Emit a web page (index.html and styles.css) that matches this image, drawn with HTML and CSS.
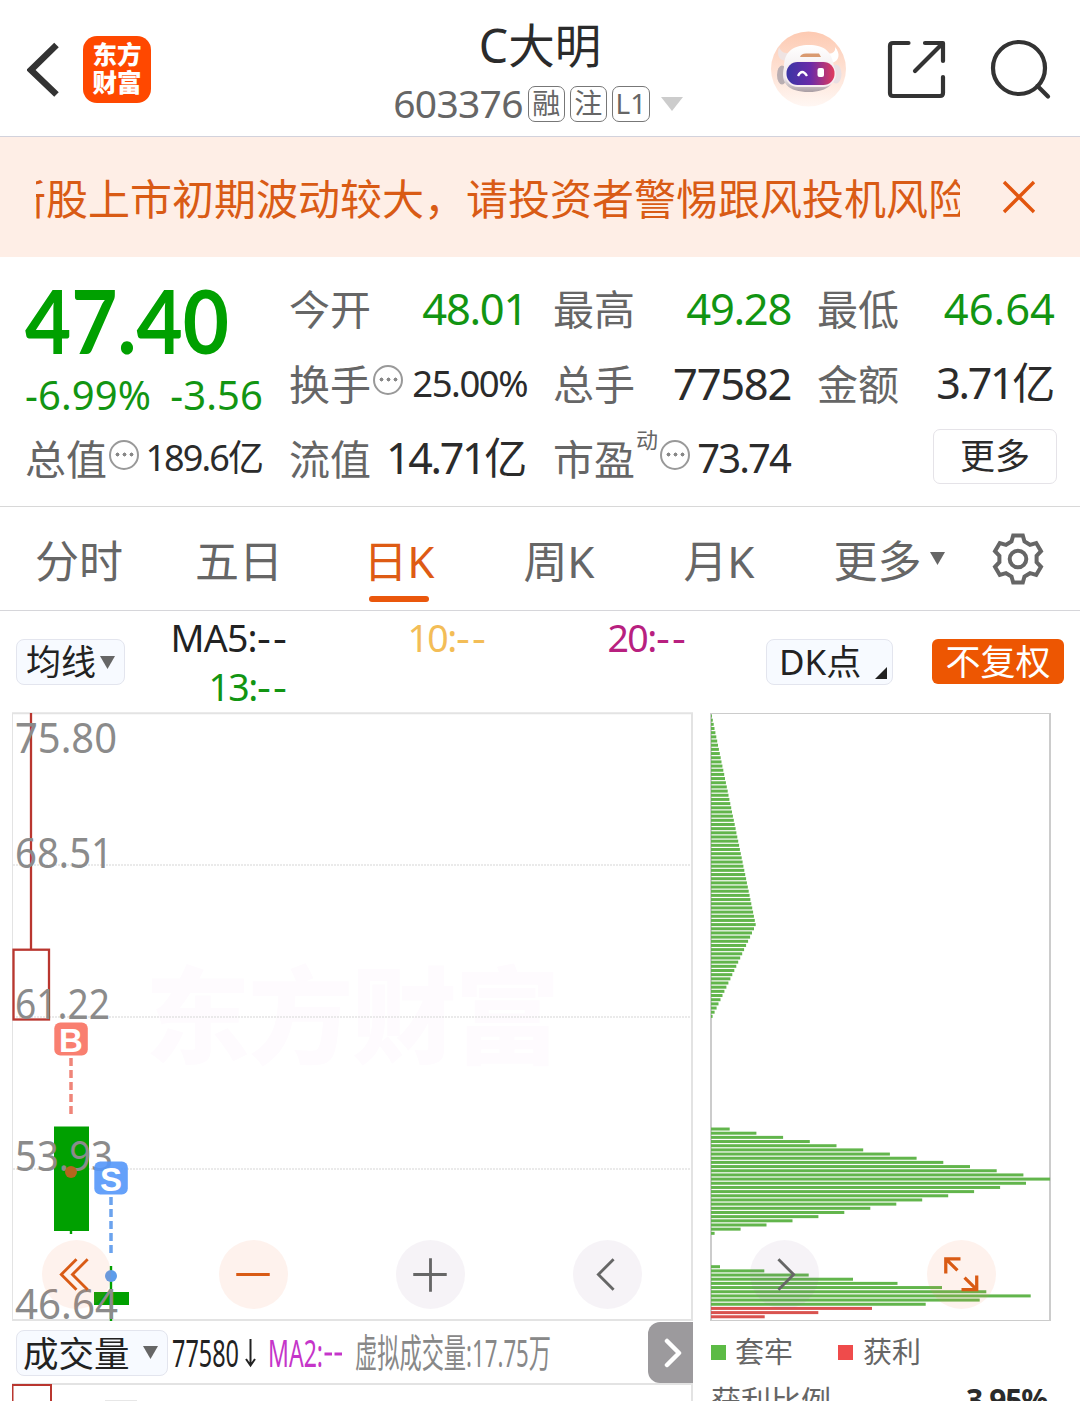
FILE: index.html
```html
<!DOCTYPE html>
<html lang="zh-CN">
<head>
<meta charset="utf-8">
<title>C大明 603376</title>
<link rel="stylesheet" href="styles.css">
</head>
<body>
<div class="app">
  <header class="header">
    <div class="header-left">
      <svg class="back" viewBox="0 0 34 56" width="34" height="56"><path d="M29.500 3 4 28 29.500 52.500" fill="none" stroke="#333" stroke-width="6.500"/></svg>
      <div class="logo"><span>东方</span><span>财富</span></div>
    </div>
    <div class="header-title">
      <h1>C大明</h1>
      <div class="code"><span class="code-num">603376</span><span class="tag">融</span><span class="tag">注</span><span class="tag tag-l">L1</span><svg width="22" height="14" viewBox="0 0 22 14"><path d="M0 0H22L11 14Z" fill="#ccc"/></svg></div>
    </div>
    <div class="header-right">
      <svg width="76" height="76" viewBox="0 0 76 76">
        <defs>
          <linearGradient id="sky" x1="0" y1="0" x2="0" y2="1"><stop offset="0" stop-color="#fdcab2"/><stop offset="1" stop-color="#fff7f3"/></linearGradient>
          <linearGradient id="visor" x1="0" y1="0" x2="1" y2="0"><stop offset="0" stop-color="#3a35a5"/><stop offset=".5" stop-color="#6a2ba8"/><stop offset="1" stop-color="#e03a5c"/></linearGradient>
          <linearGradient id="shell" x1="0" y1="0" x2="0" y2="1"><stop offset="0" stop-color="#fff"/><stop offset=".7" stop-color="#efe9eb"/><stop offset="1" stop-color="#a99da3"/></linearGradient>
        </defs>
        <circle cx="38.500" cy="38" r="37.500" fill="url(#sky)"/>
        <path d="M9 16C6 25 10 30 17 30L24 21C15 24 11 21 9 16Z" fill="#efe3e2"/>
        <path d="M65 16C71 23 69 30 62 32L54 22C62 24 66 21 65 16Z" fill="#fff"/>
        <ellipse cx="12" cy="44" rx="5" ry="9.500" fill="#b9aeb2"/><ellipse cx="66" cy="43" rx="5.500" ry="9.500" fill="#e9e0e3"/>
        <path d="M14 36C14 20 24 14 39 14S62 20 64 36C68 52 58 61 39 61C18 61 10 52 14 36Z" fill="url(#shell)"/>
        <path d="M30 26Q31 22.500 36 22.500H49L51 26Z" fill="#d99a70"/>
        <rect x="15" y="30" width="51" height="26" rx="13" fill="#f8edf1"/>
        <rect x="16.500" y="31" width="48" height="23" rx="11" fill="url(#visor)"/>
        <path d="M28 45Q32 37 37 45" fill="none" stroke="#fff" stroke-width="2.300"/>
        <rect x="47.500" y="37" width="6.500" height="9" rx="2" fill="#fff"/>
      </svg>
      <svg class="share" width="60" height="60" viewBox="0 0 60 60" fill="none" stroke="#333" stroke-width="4.200" stroke-linecap="round" stroke-linejoin="round"><path d="M21.500 4H6Q3 4 3 7V54Q3 57 6 57H53Q56 57 56 54V38M38 4H56V22M55 5 28 32"/></svg>
      <svg width="62" height="62" viewBox="0 0 62 62" fill="none" stroke="#333" stroke-width="4.200" stroke-linecap="round"><circle cx="30" cy="29" r="26"/><path d="M48.500 47 59 57.500"/></svg>
    </div>
  </header>

  <div class="notice">
    <div class="marquee"><span>新股上市初期波动较大，请投资者警惕跟风投机风险</span></div>
    <svg width="34" height="34" viewBox="0 0 34 34"><path d="M2 2 32 32M32 2 2 32" stroke="#e2560f" stroke-width="3.400"/></svg>
  </div>

  <section class="quote">
    <div class="price">
      <svg class="price-now" width="210" height="72"><text x="0" y="66.500" textLength="204" lengthAdjust="spacingAndGlyphs">47.40</text></svg>
      <div class="change"><span>-6.99%</span><span>-3.56</span></div>
    </div>
    <div class="cell"><label>今开</label><b class="down">48.01</b></div>
    <div class="cell"><label>最高</label><b class="down">49.28</b></div>
    <div class="cell"><label>最低</label><b class="down low">46.64</b></div>
    <div class="cell"><label>换手</label><i class="more-dot"></i><b class="mid">25.00%</b></div>
    <div class="cell"><label>总手</label><b>77582</b></div>
    <div class="cell"><label>金额</label><b class="tight">3.71亿</b></div>
    <div class="cell"><label>总值</label><i class="more-dot"></i><b class="small">189.6亿</b></div>
    <div class="cell"><label>流值</label><b class="tight">14.71亿</b></div>
    <div class="cell"><label>市盈</label><sup>动</sup><i class="more-dot"></i><b class="pe">73.74</b></div>
    <div class="cell cell-end"><button class="more">更多</button></div>
  </section>

  <nav class="tabs">
    <a>分时</a><a>五日</a><a class="active">日K</a><a>周K</a><a>月K</a>
    <a class="tab-more">更多<svg width="15" height="13" viewBox="0 0 15 13"><path d="M0 0H15L7.500 13Z" fill="#666"/></svg></a>
    <svg class="gear" width="52" height="54" viewBox="-26 -27 52 54" fill="none" stroke="#666" stroke-width="4"><path d="M-4.800 -23.500H4.800L6.500 -17.500L12 -14.200L18.200 -16L23 -7.800L18.600 -3.200V3.200L23 7.800L18.200 16L12 14.200L6.500 17.500L4.800 23.500H-4.800L-6.500 17.500L-12 14.200L-18.200 16L-23 7.800L-18.600 3.200V-3.200L-23 -7.800L-18.200 -16L-12 -14.200L-6.500 -17.500Z"/><circle r="8.300"/></svg>
  </nav>

  <div class="indicators">
    <div class="pill pill-ma">均线<svg width="15" height="13" viewBox="0 0 15 13"><path d="M0 0H15L7.500 13Z" fill="#666"/></svg></div>
    <div class="ma">
      <span class="ma5">MA5:<u>--</u></span><span class="ma10">10:<u>--</u></span><span class="ma20">20:<u>--</u></span>
      <span class="ma13">13:<u>--</u></span>
    </div>
    <div class="pill pill-dk">DK点<svg width="12" height="12" viewBox="0 0 12 12"><path d="M12 0V12H0Z" fill="#222"/></svg></div>
    <div class="adjust">不复权</div>
  </div>

  <main class="charts">
    <div class="left">
      <svg class="kline" width="682" height="610" viewBox="12 712 682 610">
        <text class="watermark" x="145" y="1055" textLength="415">东方财富</text>
        <path d="M13 865H692M13 1017H692M13 1169H692" stroke="#e3e3e3" stroke-width="1.300" stroke-dasharray="2 1"/>
        <path d="M12.500 1320V713.500" stroke="#e3e3e3"/><path d="M12 713.300H692V1320H12" fill="none" stroke="#e3e3e3" stroke-width="2"/>
        <g fill="none" stroke="#b9362f" stroke-width="2.300"><path d="M31 713V949"/><rect x="13.500" y="949.700" width="35.500" height="69.800"/></g>
        <g fill="#00a000"><rect x="54" y="1126.500" width="35" height="104.500"/><rect x="69.800" y="1230" width="2.400" height="4"/><rect x="94" y="1292" width="35" height="13"/><rect x="109.800" y="1266" width="2.400" height="55"/></g>
        <g class="axis"><text x="15" y="753" textLength="102" lengthAdjust="spacingAndGlyphs">75.80</text><text x="15" y="867.500" textLength="98" lengthAdjust="spacingAndGlyphs">68.51</text><text x="15" y="1019" textLength="95" lengthAdjust="spacingAndGlyphs">61.22</text><text x="15" y="1171" textLength="98" lengthAdjust="spacingAndGlyphs">53.93</text><text x="15" y="1319" textLength="103" lengthAdjust="spacingAndGlyphs">46.64</text></g>
        <path d="M71 1058V1114" stroke="#ef8579" stroke-width="3.500" stroke-dasharray="8 4"/>
        <path d="M111 1197V1253" stroke="#6ba3ee" stroke-width="3.500" stroke-dasharray="8 4"/>
        <circle cx="71" cy="1172" r="6" fill="#b5651d"/><circle cx="111" cy="1276" r="6" fill="#5c9ceb"/>
        <rect x="54.300" y="1022.500" width="33.500" height="33" rx="6" fill="#f97f70"/><rect x="94.300" y="1161.500" width="33.500" height="33" rx="6" fill="#5497fa" opacity=".9"/>
        <g class="mark"><text x="71" y="1051.500">B</text><text x="111" y="1190.500">S</text></g>
      </svg>
      <div class="volume">
        <div class="pill pill-vol">成交量<svg width="15" height="13" viewBox="0 0 15 13"><path d="M0 0H15L7.500 13Z" fill="#666"/></svg></div>
        <svg class="volume-text" width="390" height="50" viewBox="168 1328 390 50">
          <text x="172" y="1367" textLength="67" lengthAdjust="spacingAndGlyphs" fill="#222">77580</text>
          <path d="M250.500 1339V1365M246 1359 250.500 1365.500 255 1359" fill="none" stroke="#222" stroke-width="2"/>
          <text x="268" y="1367" textLength="55" lengthAdjust="spacingAndGlyphs" fill="#c535c9">MA2:</text>
          <path d="M324.500 1354H332M334.500 1354H342" stroke="#c535c9" stroke-width="2.800"/>
          <text x="355" y="1367" textLength="196" lengthAdjust="spacingAndGlyphs" fill="#888">虚拟成交量:17.75万</text>
        </svg>
        <div class="next"><svg width="18" height="30" viewBox="0 0 18 30"><path d="M3 3 15 15 3 27" fill="none" stroke="#fff" stroke-width="4.500" stroke-linecap="round" stroke-linejoin="round"/></svg></div>
      </div>
      <svg class="volume-chart" width="682" height="18" viewBox="12 1383 682 18"><path d="M12 1384H692V1401" fill="none" stroke="#e3e3e3" stroke-width="2"/><path d="M12.500 1401V1385H51V1401" fill="none" stroke="#b9362f" stroke-width="2"/><path d="M105 1400.500H137" stroke="#e7e7e7"/></svg>
    </div>
    <div class="right">
      <svg class="chips" width="342" height="610" viewBox="710 712 342 610">
        <path d="M711 713.500H1050M711 1320.500H1050" stroke="#ccc"/><path d="M711 713V1321M1050 713V1321" stroke="#ccc" stroke-width="2"/>
        <g id="chip-bars"></g>
      </svg>
      <div class="legend"><i class="lg-green"></i><span>套牢</span><i class="lg-red"></i><span>获利</span></div>
      <div class="ratio"><span>获利比例</span><strong>3.95%</strong></div>
    </div>
    <div class="controls">
      <span class="round warm"><svg viewBox="-34 -34 68 68"><path d="M0 -15-15 0 0 15M11 -15-4 0 11 15"/></svg></span>
      <span class="round warm"><svg viewBox="-34 -34 68 68"><path d="M-17 0H16"/></svg></span>
      <span class="round"><svg viewBox="-34 -34 68 68"><path d="M-17 0H16M0 -16V17"/></svg></span>
      <span class="round"><svg viewBox="-34 -34 68 68"><path d="M6 -15-9 0 6 15"/></svg></span>
      <span class="round"><svg viewBox="-34 -34 68 68"><path d="M-6 -15 9 0-6 15"/></svg></span>
      <span class="round warm"><svg viewBox="-34 -34 68 68"><path d="M-4 -4-15 -15M-15.500 -1V-15.500H-1M3 3 14 14M0 15H15V1" stroke-width="3.200"/></svg></span>
    </div>
  </main>
</div>
<script src="chips.js"></script>
</body>
</html>
```
FILE: styles.css
```css
* { box-sizing: border-box; }
body { margin: 0; background: #fff; font-family: "Noto Sans", "Noto Sans CJK SC", sans-serif; color: #2b2b2b; }
.app { width: 1080px; height: 1401px; overflow: hidden; }
svg { display: block; flex: none; }

.header { height: 137px; border-bottom: 1px solid #d2d2dc; display: grid; grid-template-columns: 360px 1fr 360px; }
.header-left { display: flex; align-items: flex-start; padding: 36px 0 0 27px; gap: 22px; }
.back { margin-top: 6px; }
.logo { width: 68px; height: 67px; border-radius: 14px; background: #ff4800; color: #fff; font-size: 24.500px; font-weight: 900; line-height: 28.500px; display: flex; flex-direction: column; align-items: center; justify-content: center; padding-bottom: 1px; }
.header-title { display: flex; flex-direction: column; align-items: center; padding-top: 15px; }
h1 { margin: 0; font-size: 46.500px; font-weight: 400; line-height: 60px; }
.code { display: flex; align-items: center; height: 56px; color: #666; margin: 1px 0 0 -4px; }
.code-num { font-size: 39px; line-height: 50px; letter-spacing: -.7px; margin: -2px 5px 0 0; }
.tag { width: 37px; height: 36px; border: 1.500px solid #777; border-radius: 7px; font-size: 28px; line-height: 33px; text-align: center; margin-right: 5px; }
.tag-l { width: 38px; margin-right: 11px; }
.header-right { display: flex; align-items: flex-start; padding: 31px 0 0 50px; }
.share { margin: 8px 42px 0 41px; }
.header-right svg:last-child { margin-top: 8px; }

.notice { height: 120px; background: #feeee6; display: flex; align-items: center; padding: 0 44px 0 36px; justify-content: space-between; }
.marquee { width: 924px; overflow: hidden; white-space: nowrap; color: #d95b15; font-size: 42px; line-height: 60px; padding-top: 4px; }
.marquee span { margin-left: -32px; }

.quote { height: 250px; border-bottom: 1px solid #d8d8d8; padding: 15px 25px 10px; display: grid; grid-template-columns: repeat(4, 238px); grid-template-rows: repeat(3, 75px); justify-content: space-between; }
.price { grid-row: span 2; color: #00a000; }
.price-now { margin-top: 15px; }
.price-now text { font-family: Lato, sans-serif; font-size: 88.500px; font-weight: 700; fill: #00a000; }
.change { display: flex; justify-content: space-between; font-size: 40px; line-height: 44px; margin-top: 14px; color: #129512; letter-spacing: .1px; }
.cell { display: flex; align-items: center; white-space: nowrap; }
.cell label { font-size: 41px; line-height: 60px; color: #666; margin-top: -2px; }
.cell b { margin: -3px 0 0 auto; font-weight: 400; font-size: 43.500px; line-height: 60px; letter-spacing: -1.300px; }
.cell .down { color: #129512; }
.cell .low { letter-spacing: 0; }
.cell .tight { letter-spacing: -2.300px; margin-right: 2px; font-size: 43px; }
.cell .mid { font-size: 36.500px; letter-spacing: -1.500px; }
.cell .small { font-size: 36px; letter-spacing: -1.900px; margin-right: 1px; }
.cell .pe { font-size: 40px; letter-spacing: -1.900px; margin-right: 1px; }
.more-dot { width: 30px; height: 30px; border: 2px solid #999; border-radius: 50%; margin: -10px 0 0 2px; background: radial-gradient(circle, #888 1.800px, transparent 2.200px) 50% 50% / 7px 7px no-repeat, radial-gradient(circle, #888 1.800px, transparent 2.200px) 3px 50% / 7px 7px no-repeat, radial-gradient(circle, #888 1.800px, transparent 2.200px) 17px 50% / 7px 7px no-repeat; }
sup { font-size: 22px; line-height: 24px; color: #666; align-self: flex-start; margin: 5px 0 0 1px; }
.cell-end { justify-content: flex-end; }
.more { width: 124px; height: 55px; border: 1.500px solid #e5e3e8; border-radius: 7px; background: #fff; font: 35px/50px "Noto Sans", "Noto Sans CJK SC", sans-serif; color: #2b2b2b; padding: 0; margin: -7px -2px 0 0; }

.tabs { height: 104px; border-bottom: 1px solid #d6d6da; display: flex; align-items: center; font-size: 44px; color: #666; }
.tabs a { width: 160px; height: 103px; line-height: 109px; text-align: center; margin-left: -1px; margin-right: 1px; }
.tabs .active { color: #de5b14; position: relative; }
.active::after { content: ""; position: absolute; left: 50px; bottom: 8px; width: 60px; height: 6px; border-radius: 3px; background: #ea570c; }
.tabs .tab-more { width: 180px; padding-top: 4px; display: flex; justify-content: center; align-items: center; gap: 8px; line-height: 60px; }
.tab-more svg { margin-top: -4px; }
.gear { margin-left: 12px; }

.indicators { height: 101px; display: flex; padding: 0 16px; }
.pill { height: 46px; border: 1.500px solid #e3e5ee; border-radius: 8px; background: #f7faff; display: flex; align-items: center; font-size: 35px; line-height: 44px; color: #222; white-space: nowrap; }
.pill-ma { width: 109px; margin-top: 28px; padding-left: 9px; gap: 4px; }
.ma { width: 561px; display: grid; grid-template-columns: 162px 199px 200px; grid-template-rows: 49px 49px; padding-top: 2px; font-size: 37.500px; line-height: 49px; letter-spacing: -1.500px; text-align: right; }
.ma u { text-decoration: none; display: inline-block; letter-spacing: 2px; transform: scaleX(1.150); margin-left: 2px; }
.ma5 { color: #222; letter-spacing: -.8px; } .ma10 { color: #f3bd57; } .ma20 { color: #b8207f; } .ma13 { color: #129512; }
.pill-dk { width: 127px; margin: 28px 0 0 80px; padding-left: 12px; gap: 11px; }
.pill-dk svg { margin: 22px 5px 0 auto; }
.adjust { width: 132px; height: 45px; margin: 28px 0 0 39px; border-radius: 6px; background: #ed5602; color: #fff; font-size: 35px; line-height: 45px; text-align: center; }

.charts { position: relative; display: flex; gap: 16px; padding-left: 12px; height: 689px; }
.left { width: 682px; }
.axis text { font-size: 41.500px; fill: #8b8b8b; }
.watermark { font-size: 105px; font-weight: 900; fill: #fefbfe; }
.mark text { font: 700 33px "Liberation Sans", sans-serif; fill: #fff; text-anchor: middle; }
.volume { height: 61px; display: flex; align-items: center; padding-left: 4px; }
.pill-vol { width: 152px; font-size: 35.500px; padding-left: 6px; gap: 13px; }
.volume-text text { font-size: 39px; }
.next { width: 45px; height: 61px; margin-left: auto; margin-right: 1px; border-radius: 12px 0 0 12px; background: #9c9a9d; display: flex; align-items: center; justify-content: center; padding-left: 4px; }
.right { width: 342px; }
.legend { display: flex; align-items: center; height: 62px; padding-left: 1px; font-size: 29px; line-height: 40px; color: #666; }
.legend span { margin-top: -2px; }
.legend i { width: 15px; height: 15px; background: #5cbb45; margin-right: 9px; margin-top: -1px; }
.legend .lg-red { background: #ef4b4b; margin-left: 45px; margin-right: 10px; }
.ratio { display: flex; justify-content: space-between; font-size: 30px; line-height: 44px; color: #666; padding: 0 5px 0 1px; margin-top: -5px; }
.ratio strong { color: #2b2b2b; font-weight: 700; letter-spacing: -1.200px; margin-top: -1px; }
.controls { position: absolute; left: 42px; top: 528px; width: 954px; display: flex; justify-content: space-between; }
.round { width: 69px; height: 69px; border-radius: 50%; background: rgba(142, 105, 155, .08); color: #666; }
.round svg { width: 69px; height: 69px; fill: none; stroke: currentColor; stroke-width: 2.800px; }
.warm { background: rgba(245, 125, 75, .1); color: #d95b15; }
```
FILE: chips.js
```js
// Cost distribution: each bar is [slot, width]; slots are 4.172px apart.
const bars = [];
for (let i = 0; i <= 50; i++) bars.push([i, 0.9 + i * 0.876]);
for (let i = 51; i <= 72; i++) bars.push([i, 43 - (i - 51) * 1.97]);
for (let i = 0; i <= 12; i++) bars.push([99 + i, 18.7 + i * 26.7]);
for (let i = 13; i <= 25; i++) bars.push([99 + i, 315 - (i - 13) * 25.95]);
[9, 53.3, 97.7, 142, 186.5, 231, 275.3, 319.7, 268.7, 214.7].forEach((w, i) => bars.push([132 + i, w]));
const profit = [161, 107.3, 53.7].map((w, i) => [142 + i, w]);

const group = document.getElementById('chip-bars');
function draw(list, color) {
  for (const [slot, width] of list) {
    const r = document.createElementNS('http://www.w3.org/2000/svg', 'rect');
    r.setAttribute('x', 711);
    r.setAttribute('y', (716 + slot * 4.172 - 1.5).toFixed(2));
    r.setAttribute('width', width.toFixed(1));
    r.setAttribute('height', 3);
    r.setAttribute('fill', color);
    group.appendChild(r);
  }
}
draw(bars, '#62b54c');
draw(profit, '#d9534f');
```
